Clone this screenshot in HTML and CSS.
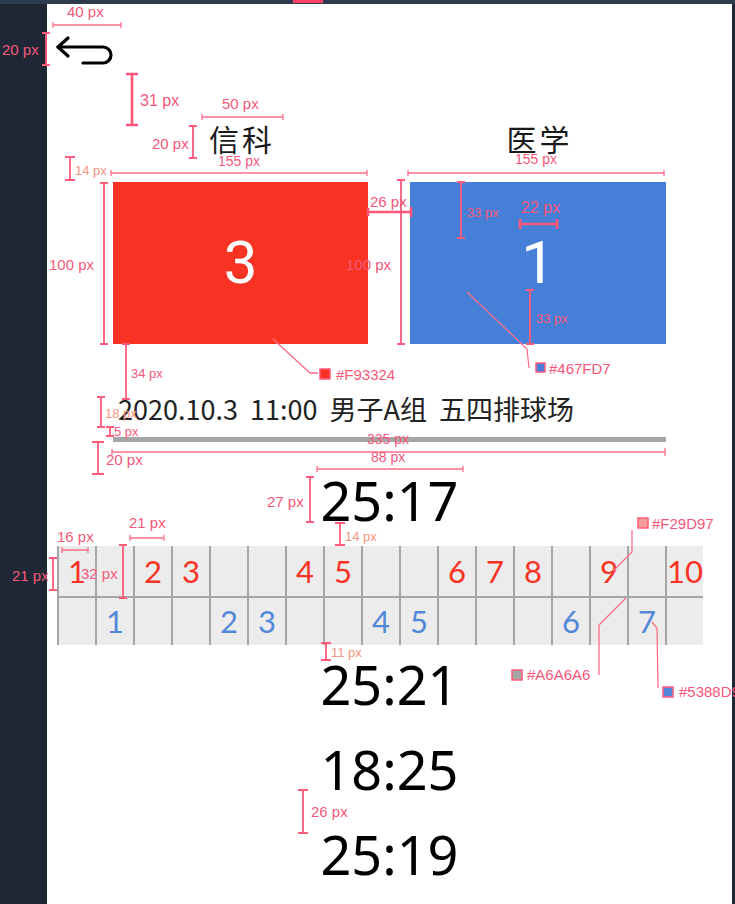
FILE: index.html
```html
<!DOCTYPE html>
<html lang="zh">
<head>
<meta charset="utf-8">
<title>比赛详情</title>
<link rel="stylesheet" href="styles.css">
</head>
<body>
<div class="topbar"><div class="topbar-mark"></div></div>
<div class="frame">
  <div class="page">
    <svg class="back" width="60" height="34" viewBox="0 0 60 34">
      <path d="M13 5 L3 14 L13 23" />
      <path d="M3 14 H48 A8 8 0 0 1 48 30 H28" />
    </svg>
    <div class="column">
      <div class="teams">
        <div class="team-name">信科</div>
        <div class="team-name">医学</div>
      </div>
      <div class="boxes">
        <div class="box box-red">3</div>
        <div class="box box-blue">1</div>
      </div>
      <div class="info">2020.10.3&nbsp; 11:00&nbsp; 男子A组&nbsp; 五四排球场</div>
      <div class="rule"></div>
      <div class="score score-first">25:17</div>
    </div>
    <div class="grid">
      <div class="cell r">1</div><div class="cell r"></div><div class="cell r">2</div><div class="cell r">3</div><div class="cell r"></div><div class="cell r"></div><div class="cell r">4</div><div class="cell r">5</div><div class="cell r"></div><div class="cell r"></div><div class="cell r">6</div><div class="cell r">7</div><div class="cell r">8</div><div class="cell r"></div><div class="cell r">9</div><div class="cell r"></div><div class="cell r">10</div>
      <div class="cell b"></div><div class="cell b">1</div><div class="cell b"></div><div class="cell b"></div><div class="cell b">2</div><div class="cell b">3</div><div class="cell b"></div><div class="cell b"></div><div class="cell b">4</div><div class="cell b">5</div><div class="cell b"></div><div class="cell b"></div><div class="cell b"></div><div class="cell b">6</div><div class="cell b"></div><div class="cell b">7</div><div class="cell b"></div>
    </div>
    <div class="column">
      <div class="score score-next">25:21</div>
      <div class="score">18:25</div>
      <div class="score">25:19</div>
    </div>
  </div>
</div>

<svg class="notes" width="735" height="904" viewBox="0 0 735 904">
  <g class="dim">
    <path d="M53 22V28M53 25H121M121 22V28"/>
    <path d="M202 114V120M202 117H283M283 114V120"/>
    <path d="M111 170V176M111 173H367M367 170V176"/>
    <path d="M408 170V176M408 173H664M664 170V176"/>
    <path d="M112 449V455M112 452H665M665 448V456"/>
    <path d="M317 466V472M317 469H463M463 466V472"/>
    <path d="M130 535V541M130 538H164M164 535V541"/>
    <path d="M62 547V553M62 550H88M88 547V553"/>
    <polyline points="467,292 527,349 529,368"/>
    <polyline points="273,339 310,373 318,373"/>
    <polyline points="632,530 632,552 613,571"/>
    <polyline points="599,675 599,625 626,598"/>
    <polyline points="652,622 657,628 658,688"/>
  </g>
  <g class="brk">
    <path d="M42 33H50M46 33V65M42 65H50"/>
    <path d="M189 126H197M193 126V158M189 158H197"/>
    <path d="M65 157H75M70 157V180M65 180H75"/>
    <path d="M100 183H108M104 183V344M100 344H108"/>
    <path d="M397 180H405M401 180V344M397 344H405"/>
    <path d="M457 182H465M461 182V238M457 238H465"/>
    <path d="M526 290H534M530 290V344M526 344H534"/>
    <path d="M122 344H130M126 344V399M122 399H130"/>
    <path d="M97 397H105M101 397V427M97 427H105"/>
    <path d="M106 427H114M110 427V436M106 436H114"/>
    <path d="M92 442H104M98 442V474M92 474H104"/>
    <path d="M306 477H314M310 477V522M306 522H314"/>
    <path d="M335 523H345M340 523V545M335 545H345"/>
    <path d="M49 558H57M53 558V590M49 590H57"/>
    <path d="M119 545H127M123 545V598M119 598H127"/>
    <path d="M321 643H331M326 643V660M321 660H331"/>
    <path d="M298 790H308M303 790V833M298 833H308"/>
  </g>
  <g class="brk-thick">
    <path d="M126 74H138M132 74V125M126 125H138"/>
    <path d="M368 208V216M368 212H411M411 207V217"/>
    <path d="M520 219V229M520 224H557M557 219V229"/>
  </g>
  <g class="swatch">
    <rect x="536" y="363" width="9" height="9" fill="#467FD7"/>
    <rect x="320" y="369" width="10" height="10" fill="#F93324"/>
    <rect x="638" y="518" width="10" height="10" fill="#F29D97"/>
    <rect x="512" y="670" width="10" height="10" fill="#A6A6A6"/>
    <rect x="663" y="687" width="10" height="10" fill="#5388D9"/>
  </g>
  <g class="label">
    <text x="67" y="17">40 px</text>
    <text x="2" y="55">20 px</text>
    <text x="140" y="106" class="big">31 px</text>
    <text x="222" y="109">50 px</text>
    <text x="152" y="149">20 px</text>
    <text x="218" y="166" class="mid">155 px</text>
    <text x="515" y="164" class="mid">155 px</text>
    <text x="49" y="270">100 px</text>
    <text x="370" y="207">26 px</text>
    <text x="346" y="270">100 px</text>
    <text x="521" y="213" class="big">22 px</text>
    <text x="549" y="374">#467FD7</text>
    <text x="336" y="380">#F93324</text>
    <text x="106" y="465">20 px</text>
    <text x="367" y="444" class="mid">335 px</text>
    <text x="371" y="462" class="mid">88 px</text>
    <text x="267" y="507">27 px</text>
    <text x="129" y="528">21 px</text>
    <text x="57" y="542">16 px</text>
    <text x="12" y="581">21 px</text>
    <text x="81" y="579">32 px</text>
    <text x="652" y="529">#F29D97</text>
    <text x="527" y="680">#A6A6A6</text>
    <text x="679" y="697">#5388D9</text>
    <text x="311" y="817">26 px</text>
  </g>
  <g class="label small">
    <text x="467" y="217">33 px</text>
    <text x="536" y="323">33 px</text>
    <text x="131" y="378">34 px</text>
    <text x="114" y="436">5 px</text>
  </g>
  <g class="label small warm">
    <text x="75" y="175">14 px</text>
    <text x="105" y="418">18 px</text>
    <text x="345" y="541">14 px</text>
    <text x="331" y="657">11 px</text>
  </g>
</svg>
</body>
</html>
```

FILE: styles.css
```css
html, body {
  margin: 0;
  padding: 0;
}

body {
  width: 735px;
  height: 904px;
  overflow: hidden;
  background: #1f2735;
  position: relative;
  font-family: "Noto Sans", "Noto Sans CJK SC", sans-serif;
}

.topbar {
  height: 4px;
  background: #2e3a4e;
}

.topbar-mark {
  margin-left: 293px;
  width: 30px;
  height: 3px;
  background: #ff4266;
}

.frame {
  display: flex;
}

.page {
  margin-left: 47px;
  width: 685px;
  height: 900px;
  background: #ffffff;
  display: flex;
  flex-direction: column;
}

.back {
  display: block;
  margin: 29px 0 0 8px;
  fill: none;
  stroke: #000000;
  stroke-width: 3.2;
  stroke-linecap: round;
  stroke-linejoin: round;
}

.column {
  margin-left: 66px;
  width: 553px;
  display: flex;
  flex-direction: column;
}

.teams {
  margin-top: 56px;
  display: grid;
  grid-template-columns: 255px 256px;
  column-gap: 42px;
}

.team-name {
  text-align: center;
  font-family: "Noto Sans CJK SC", sans-serif;
  font-size: 30px;
  line-height: 30px;
  letter-spacing: 3px;
  padding-left: 3px;
  color: #1a1a1a;
}

.boxes {
  margin-top: 29px;
  display: grid;
  grid-template-columns: 255px 256px;
  column-gap: 42px;
}

.box {
  height: 162px;
  display: flex;
  align-items: center;
  justify-content: center;
  color: #ffffff;
  font-family: Roboto, "Liberation Sans", sans-serif;
  font-size: 60px;
  line-height: 1;
}

.box-red {
  background: #F93324;
}

.box-blue {
  background: #467FD7;
}

.info {
  margin-top: 50px;
  padding-left: 5px;
  font-family: "Noto Sans CJK SC", sans-serif;
  font-size: 27px;
  line-height: 30px;
  color: #222222;
  white-space: nowrap;
}

.rule {
  margin-top: 13px;
  height: 5px;
  background: #A6A6A6;
}

.score {
  text-align: center;
  font-family: "Noto Sans", sans-serif;
  font-size: 54px;
  line-height: 60px;
  color: #000000;
  margin-top: 25px;
}

.score-first {
  margin-top: 28px;
}

.score-next {
  margin-top: 9px;
}

.grid {
  margin: 16px 0 0 10px;
  width: 646px;
  display: grid;
  grid-template-columns: repeat(17, 38px);
  grid-template-rows: 52px 47px;
  background: #ececec;
}

.cell {
  border-left: 2px solid #A6A6A6;
  display: flex;
  align-items: center;
  justify-content: center;
  font-family: Lato, "Noto Sans", sans-serif;
  font-size: 31px;
  line-height: 1;
  white-space: nowrap;
}

.cell.r {
  color: #F93324;
  border-bottom: 2px solid #A6A6A6;
}

.cell.b {
  color: #5388D9;
}

.notes {
  position: absolute;
  left: 0;
  top: 0;
  pointer-events: none;
}

.dim path,
.dim polyline {
  fill: none;
  stroke: #ff6f89;
  stroke-width: 1.3;
}

.brk path {
  fill: none;
  stroke: #ff5b7b;
  stroke-width: 1.8;
}

.brk-thick path {
  fill: none;
  stroke: #ff5577;
  stroke-width: 2.6;
}

.swatch rect {
  stroke: #ff5b7b;
  stroke-width: 1.5;
}

.label text {
  font-family: "Liberation Sans", Arial, sans-serif;
  font-size: 15px;
  fill: #f5587a;
}

.label text.big {
  font-size: 16px;
}

.label text.mid {
  font-size: 14px;
}

.label.small text {
  font-size: 13px;
}

.label.warm text {
  fill: #f79480;
}
```
